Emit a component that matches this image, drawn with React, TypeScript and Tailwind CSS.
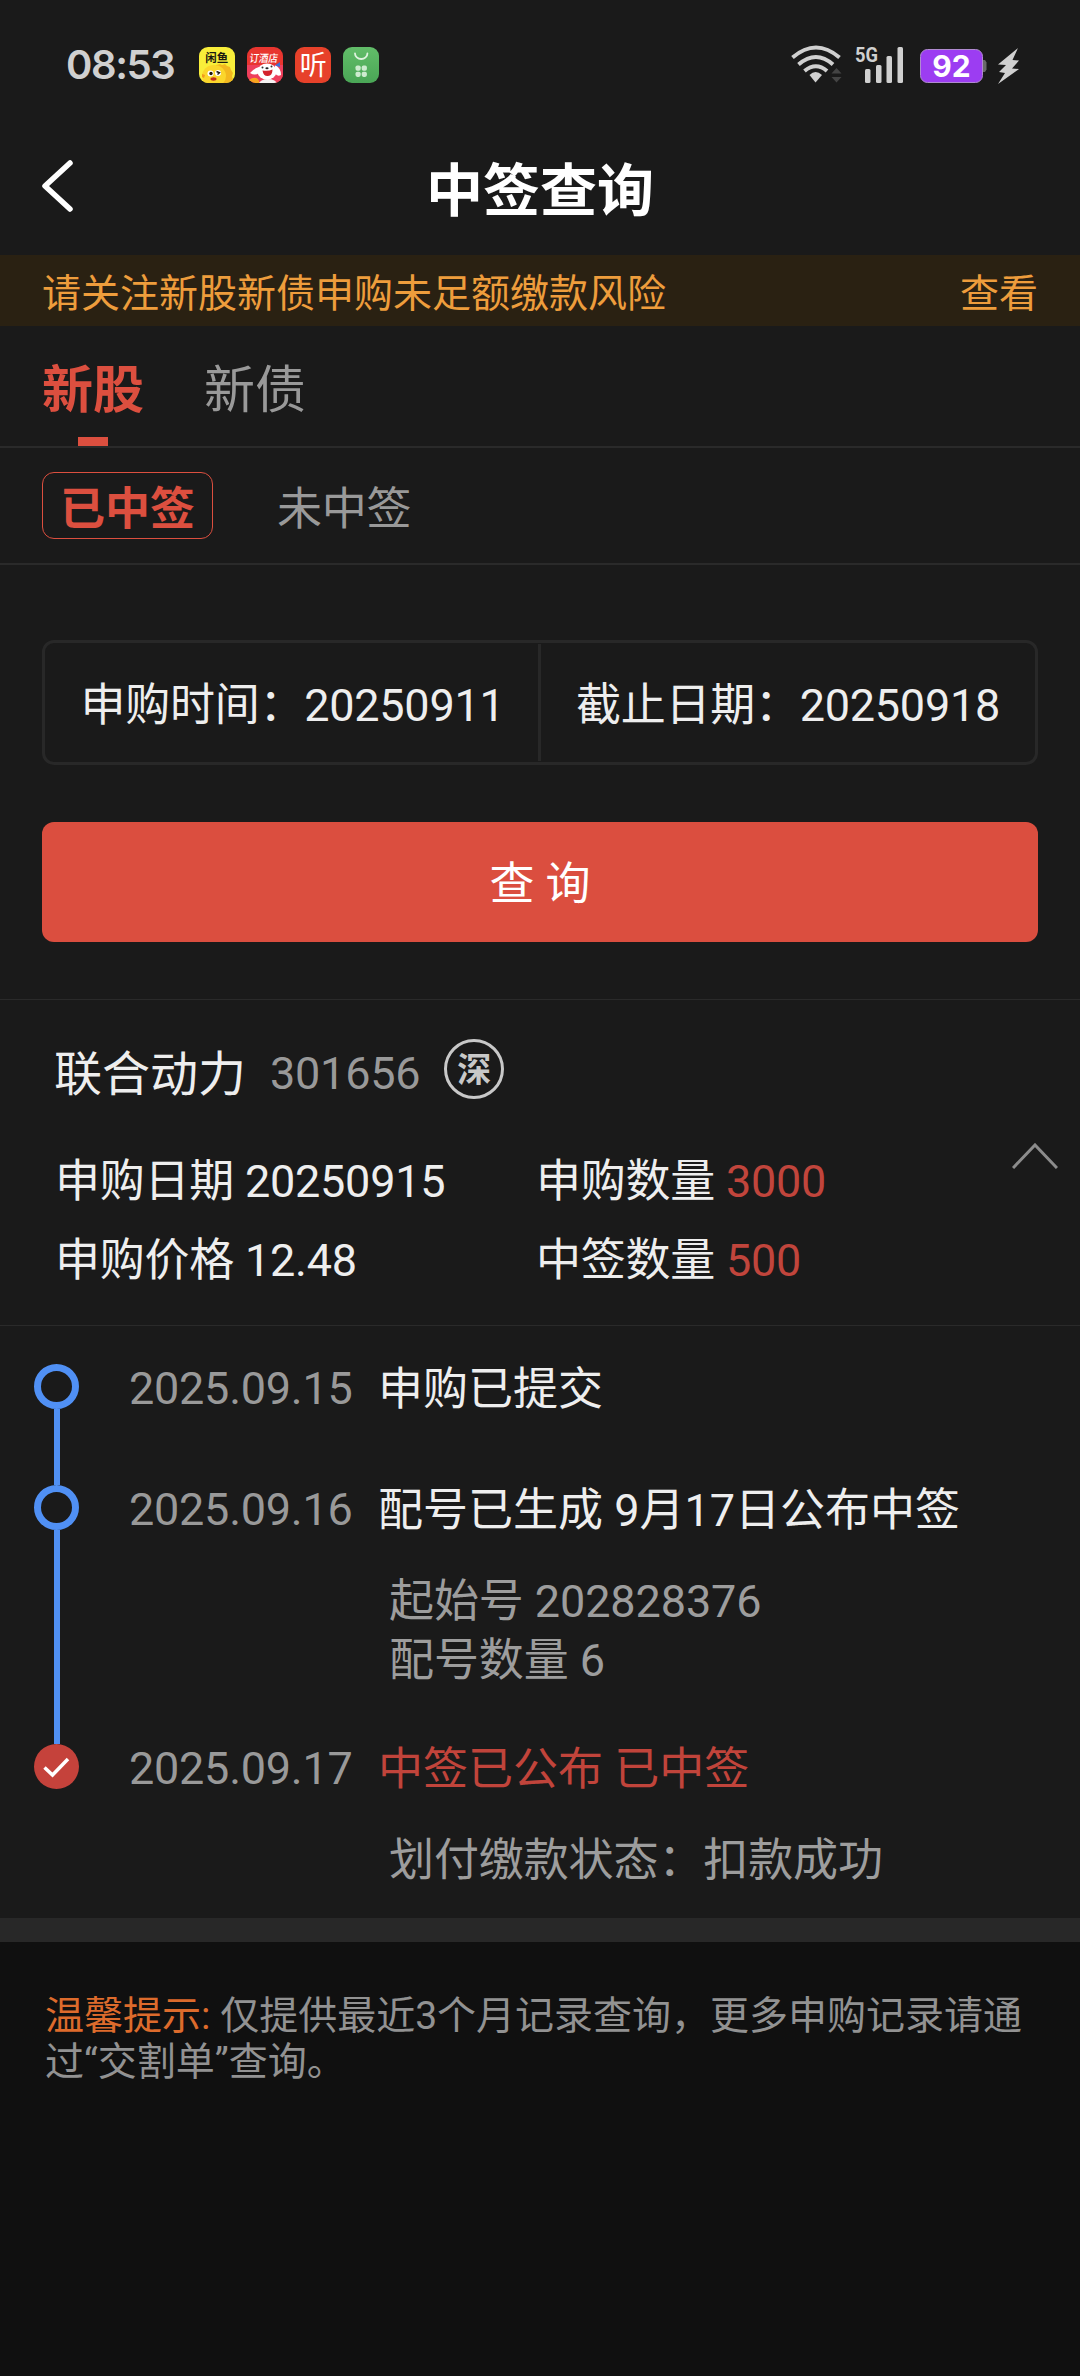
import React from 'react';
import { clsx } from 'clsx';

type Step = {
  date: string;
  title: string;
  details: string[];
  done?: boolean;
  height: string;
};

const steps: Step[] = [
  { date: '2025.09.15', title: '申购已提交', details: [], height: 'h-[121px]' },
  {
    date: '2025.09.16',
    title: '配号已生成 9月17日公布中签',
    details: ['起始号 202828376', '配号数量 6'],
    height: 'h-[259px]',
  },
  {
    date: '2025.09.17',
    title: '中签已公布 已中签',
    details: ['划付缴款状态：扣款成功'],
    done: true,
    height: 'h-[174px]',
  },
];

const info = [
  { label: '申购日期', value: '20250915' },
  { label: '申购数量', value: '3000', highlight: true },
  { label: '申购价格', value: '12.48' },
  { label: '中签数量', value: '500', highlight: true },
];

const AppIcons: React.FC = () => (
  <div className="flex gap-3">
    <svg width="36" height="36" viewBox="0 0 36 36">
      <defs>
        <clipPath id="tile">
          <rect width="36" height="36" rx="9" />
        </clipPath>
      </defs>
      <g clipPath="url(#tile)">
        <rect width="36" height="36" fill="#f8ee3a" />
        <path d="M17 18l4-1 2 1 3-1 2 2 3 1 1 3 2 3-1 3 1 4-3 5H10z" fill="#f3b81f" />
        <ellipse cx="15" cy="29" rx="12" ry="11" fill="#fbd62c" />
        <path d="M3 27l3 1-1 3-2-1z" fill="#f29b1d" />
        <circle cx="11.5" cy="26.5" r="3" fill="#fff" />
        <circle cx="19" cy="26" r="3" fill="#fff" />
        <circle cx="12" cy="26.5" r="1.7" fill="#20180c" />
        <path d="M17.5 24.5l3 1.3-2 1.7" stroke="#20180c" strokeWidth="1.4" fill="none" />
        <ellipse cx="14.5" cy="32" rx="3" ry="1.7" fill="#c0301c" />
      </g>
      <text x="6.3" y="15" textLength="23" lengthAdjust="spacingAndGlyphs" fontSize="11.5" fontWeight="700" fill="#1c1a10" className="font-['Noto_Sans_CJK_SC',sans-serif]">
        闲鱼
      </text>
    </svg>
    <svg width="36" height="36" viewBox="0 0 36 36">
      <g clipPath="url(#tile)">
        <rect width="36" height="36" fill="#e8352f" />
        <rect y="18" width="36" height="18" fill="#ee3f5c" />
        <path d="M2 33q5-4 9-1l2 4H2z" fill="#f7a51e" />
        <ellipse cx="21" cy="37" rx="9" ry="5" fill="#f4f2f2" />
        <path d="M12 20q-6 2-9 6 5 3 9 0z" fill="#fff" />
        <path d="M28 18q6 3 6 10-4 2-6-2z" fill="#fff" />
        <ellipse cx="20" cy="24.5" rx="9.5" ry="8" fill="#fff" />
        <circle cx="15.5" cy="20.5" r="1" fill="#333" />
        <circle cx="24.5" cy="19.5" r="1" fill="#333" />
        <ellipse cx="20" cy="21.3" rx="1.6" ry="1" fill="#222" />
        <path d="M15.5 23.5q6 1 10-1 0 6-4.5 6.500t-5.500-5.500z" fill="#d4222c" />
        <path d="M28 18.5l5-3.5v5z" fill="#3b6fd8" />
      </g>
      <text x="4" y="15" textLength="28.5" lengthAdjust="spacingAndGlyphs" fontSize="10.5" fontWeight="500" fill="#fff" transform="skewX(-8)" className="font-['Noto_Sans_CJK_SC',sans-serif]">
        订酒店
      </text>
    </svg>
    <svg width="36" height="36" viewBox="0 0 36 36" className="overflow-visible">
      <rect width="36" height="36" rx="9" fill="#e7412a" />
      <text x="18.3" y="28" textAnchor="middle" fontSize="27" fontWeight="400" fill="#fff" className="font-['Noto_Sans_CJK_SC',sans-serif]">
        听
      </text>
    </svg>
    <svg width="36" height="36" viewBox="0 0 36 36">
      <defs>
        <linearGradient id="leaf" x1="0" y1="0" x2="0" y2="1">
          <stop offset="0" stopColor="#62bd69" />
          <stop offset="1" stopColor="#4aa656" />
        </linearGradient>
      </defs>
      <rect width="36" height="36" rx="9" fill="url(#leaf)" />
      <path d="M12 6.5a6.2 5.5 0 0 0 12.4 0" fill="none" stroke="#dff3df" strokeWidth="1.8" strokeLinecap="round" />
      <g fill="#cdebcf">
        <rect x="12.5" y="18.5" width="5.2" height="5.2" rx="1.8" />
        <rect x="18.7" y="18.5" width="5.2" height="5.2" rx="1.8" />
        <rect x="12.5" y="24.7" width="5.2" height="5.2" rx="1.8" />
        <rect x="18.7" y="24.7" width="5.2" height="5.2" rx="1.8" />
      </g>
    </svg>
  </div>
);

const StatusIcons: React.FC = () => (
  <svg width="230" height="40" viewBox="0 0 230 40" className="mb-[3px] overflow-visible font-['Roboto',sans-serif]">
    {/* wifi */}
    <g fill="none" stroke="#d0d0d0" strokeWidth="4">
      <path d="M1.5 13.5Q25-6.5 48.5 13.5" />
      <path d="M7.5 20.5Q25 5.5 42 20.5" />
      <path d="M13.5 27Q25 17.5 36 27" />
    </g>
    <path d="M18.5 31q6-6 12.500 0L24.500 38.500z" fill="#d0d0d0" />
    <path d="M40.500 29.500l5-5.500 5 5.500zM40.500 33l5 5.500 5-5.500z" fill="#444" />
    {/* signal */}
    <text x="64" y="18" fontSize="21" fontWeight="700" textLength="23" lengthAdjust="spacingAndGlyphs" fill="#d0d0d0">5G</text>
    <g fill="#d0d0d0">
      <rect x="74" y="25" width="5.500" height="14" rx="1.500" />
      <rect x="85" y="21" width="5.500" height="18" rx="1.500" />
      <rect x="95.500" y="12" width="5.500" height="27" rx="1.500" />
      <rect x="106.500" y="3" width="5.500" height="36" rx="1.500" />
    </g>
    {/* battery */}
    <path d="M191.500 16h2.500l1.500 2.500v7l-1.500 2.500h-2.500z" fill="#6a6a6a" />
    <rect x="129.500" y="5.500" width="62" height="33" rx="7" fill="#9c3df2" stroke="#b08bd0" />
    <text x="160.500" y="33" textAnchor="middle" fontSize="30" fontWeight="700" fill="#fff" className="font-['Inter',sans-serif]">92</text>
    <path d="M227 4L207 20.500l8 .5-7 7 6 1-7 11L228 25l-7-.5 7-8-6.500-.5z" fill="#d0d0d0" />
  </svg>
);

const Timeline: React.FC = () => (
  <section className="pt-[38px]">
    {steps.map((step, i) => (
      <div key={step.date} className={clsx('flex pl-[34px]', step.height)}>
        <div className="flex w-[45px] flex-col items-center">
          {step.done ? (
            <svg width="45" height="45" viewBox="0 0 45 45" className="shrink-0">
              <circle cx="22.5" cy="22.5" r="22.5" fill="#c5423b" />
              <path d="M10.5 23.5l8 7.500L34 15" fill="none" stroke="#fff" strokeWidth="3.500" />
            </svg>
          ) : (
            <div className="size-[45px] shrink-0 rounded-full border-[7px] border-[#5090f4]" />
          )}
          {i < steps.length - 1 && <div className="ml-px w-1.5 flex-1 bg-[#5090f4]" />}
        </div>
        <div className="ml-[50px] pt-0.5">
          <div className="flex h-[45px] leading-[45px]">
            <span className="w-[249px] tracking-[-0.25px] text-[#999999]">{step.date}</span>
            <span className={clsx('pt-px', step.done ? 'text-[#c1443b]' : 'text-[#eeeeee]')}>{step.title}</span>
          </div>
          {step.details.length > 0 && (
            <div className="mt-10 ml-[260px] leading-[59px] tracking-[-0.1px] text-[#9d9d9d]">
              {step.details.map((line) => (
                <p key={line}>{line}</p>
              ))}
            </div>
          )}
        </div>
      </div>
    ))}
  </section>
);

const App: React.FC = () => {
  return (
    <div className="flex min-h-[2376px] w-[1080px] flex-col bg-[#101010] font-['Roboto','Noto_Sans_CJK_SC',sans-serif] text-[45px] whitespace-nowrap">
      <main className="bg-[#1a1a1a]">
        {/* Status bar */}
        <div className="flex h-[130px] items-center justify-between pr-[59px] pl-[66px]">
          <div className="flex items-center">
            <span className="w-[133px] font-['Inter',sans-serif] text-[40px] leading-[40px] font-semibold tracking-[-1.4px] text-[#d0d0d0]">08:53</span>
            <AppIcons />
          </div>
          <StatusIcons />
        </div>

        {/* Title bar */}
        <header className="grid h-[125px] grid-cols-[1fr_auto_1fr] items-center">
          <svg width="34" height="56" viewBox="0 0 34 56" className="mb-3.5 ml-10">
            <path d="M30 5L5 28l25 23" fill="none" stroke="#fff" strokeWidth="5.5" strokeLinecap="round" strokeLinejoin="round" />
          </svg>
          <h1 className="pb-0.5 text-[57px] leading-[57px] font-bold text-white">中签查询</h1>
        </header>

        <div className="flex h-[71px] items-center justify-between bg-[#2a2112] px-[42px] pt-[7px] text-[39px] text-[#ee9d3c]">
          <span>请关注新股新债申购未足额缴款风险</span>
          <span>查看</span>
        </div>

        {/* Tabs */}
        <nav className="flex h-[122px] gap-[60px] border-b-2 border-[#2a2a2a] pl-[42px] text-[51px] leading-[51px]">
          <div className="flex flex-col items-center justify-between pt-[39px] font-bold text-[#dc4f3f]">
            新股
            <div className="h-[9px] w-[30px] bg-[#dc4f3f]" />
          </div>
          <div className="pt-[39px] text-[#999999]">新债</div>
        </nav>
        <div className="flex h-[117px] items-center gap-16 border-b-2 border-[#2a2a2a] pl-[42px]">
          <div className="flex h-[67px] w-[171px] items-center justify-center rounded-xl border border-[#dc4f3f] pt-[7px] leading-[45px] font-bold text-[#dc4f3f]">已中签</div>
          <div className="pt-[7px] leading-[45px] tracking-[-0.25px] text-[#999999]">未中签</div>
        </div>

        {/* Query form */}
        <section className="border-b border-[#2a2a2a] px-[42px] pt-[75px] pb-[57px]">
          <div className="flex h-[125px] rounded-xl border-[3px] border-[#282828] py-px tracking-[-0.25px] text-[#eeeeee]">
            <div className="flex w-[496px] items-center justify-center border-r-[3px] border-[#282828] pt-1.5 pl-0.5">申购时间：20250911</div>
            <div className="flex flex-1 items-center justify-center pt-1.5">截止日期：20250918</div>
          </div>
          <button className="mt-[57px] flex h-[120px] w-full items-center justify-center rounded-xl bg-[#db4e3f] pt-1.5 text-white">查 询</button>
        </section>

        {/* Stock summary */}
        <section className="h-[326px] border-b border-[#2a2a2a] pl-[54px]">
          <div className="flex h-[142px] items-center">
            <span className="pt-2 text-[48px] leading-[48px] text-[#eeeeee]">联合动力</span>
            <span className="ml-6 pt-[5px] leading-[45px] tracking-[-0.25px] text-[#999999]">301656</span>
            <span className="mb-1 ml-6 flex size-[60px] items-center justify-center rounded-full border-[3px] border-[#c8c8c8] pt-0.5 text-[34px] leading-[34px] font-bold text-[#c8c8c8]">深</span>
          </div>
          <div className="flex items-start">
            <div className="grid w-[958px] grid-cols-[481px_1fr] pl-px leading-[79px] tracking-[-0.25px] text-[#eeeeee]">
              {info.map((item) => (
                <div key={item.label}>
                  {item.label} <span className={clsx(item.highlight && 'text-[#c1453c]')}>{item.value}</span>
                </div>
              ))}
            </div>
            <svg width="46" height="26" viewBox="0 0 46 26" className="mt-px">
              <path d="M1 25L23 2l22 23" fill="none" stroke="#8c8c8c" strokeWidth="3" />
            </svg>
          </div>
        </section>

        <Timeline />
      </main>

      <div className="h-6 bg-[#282828]" />
      <p className="px-[45px] pt-[51px] text-[39px] leading-[46px] break-all whitespace-normal text-[#929292]">
        <span className="text-[#dd6b2c]">温馨提示:</span> 仅提供最近3个月记录查询，更多申购记录请通过“交割单”查询。
      </p>
    </div>
  );
};

export default App;
